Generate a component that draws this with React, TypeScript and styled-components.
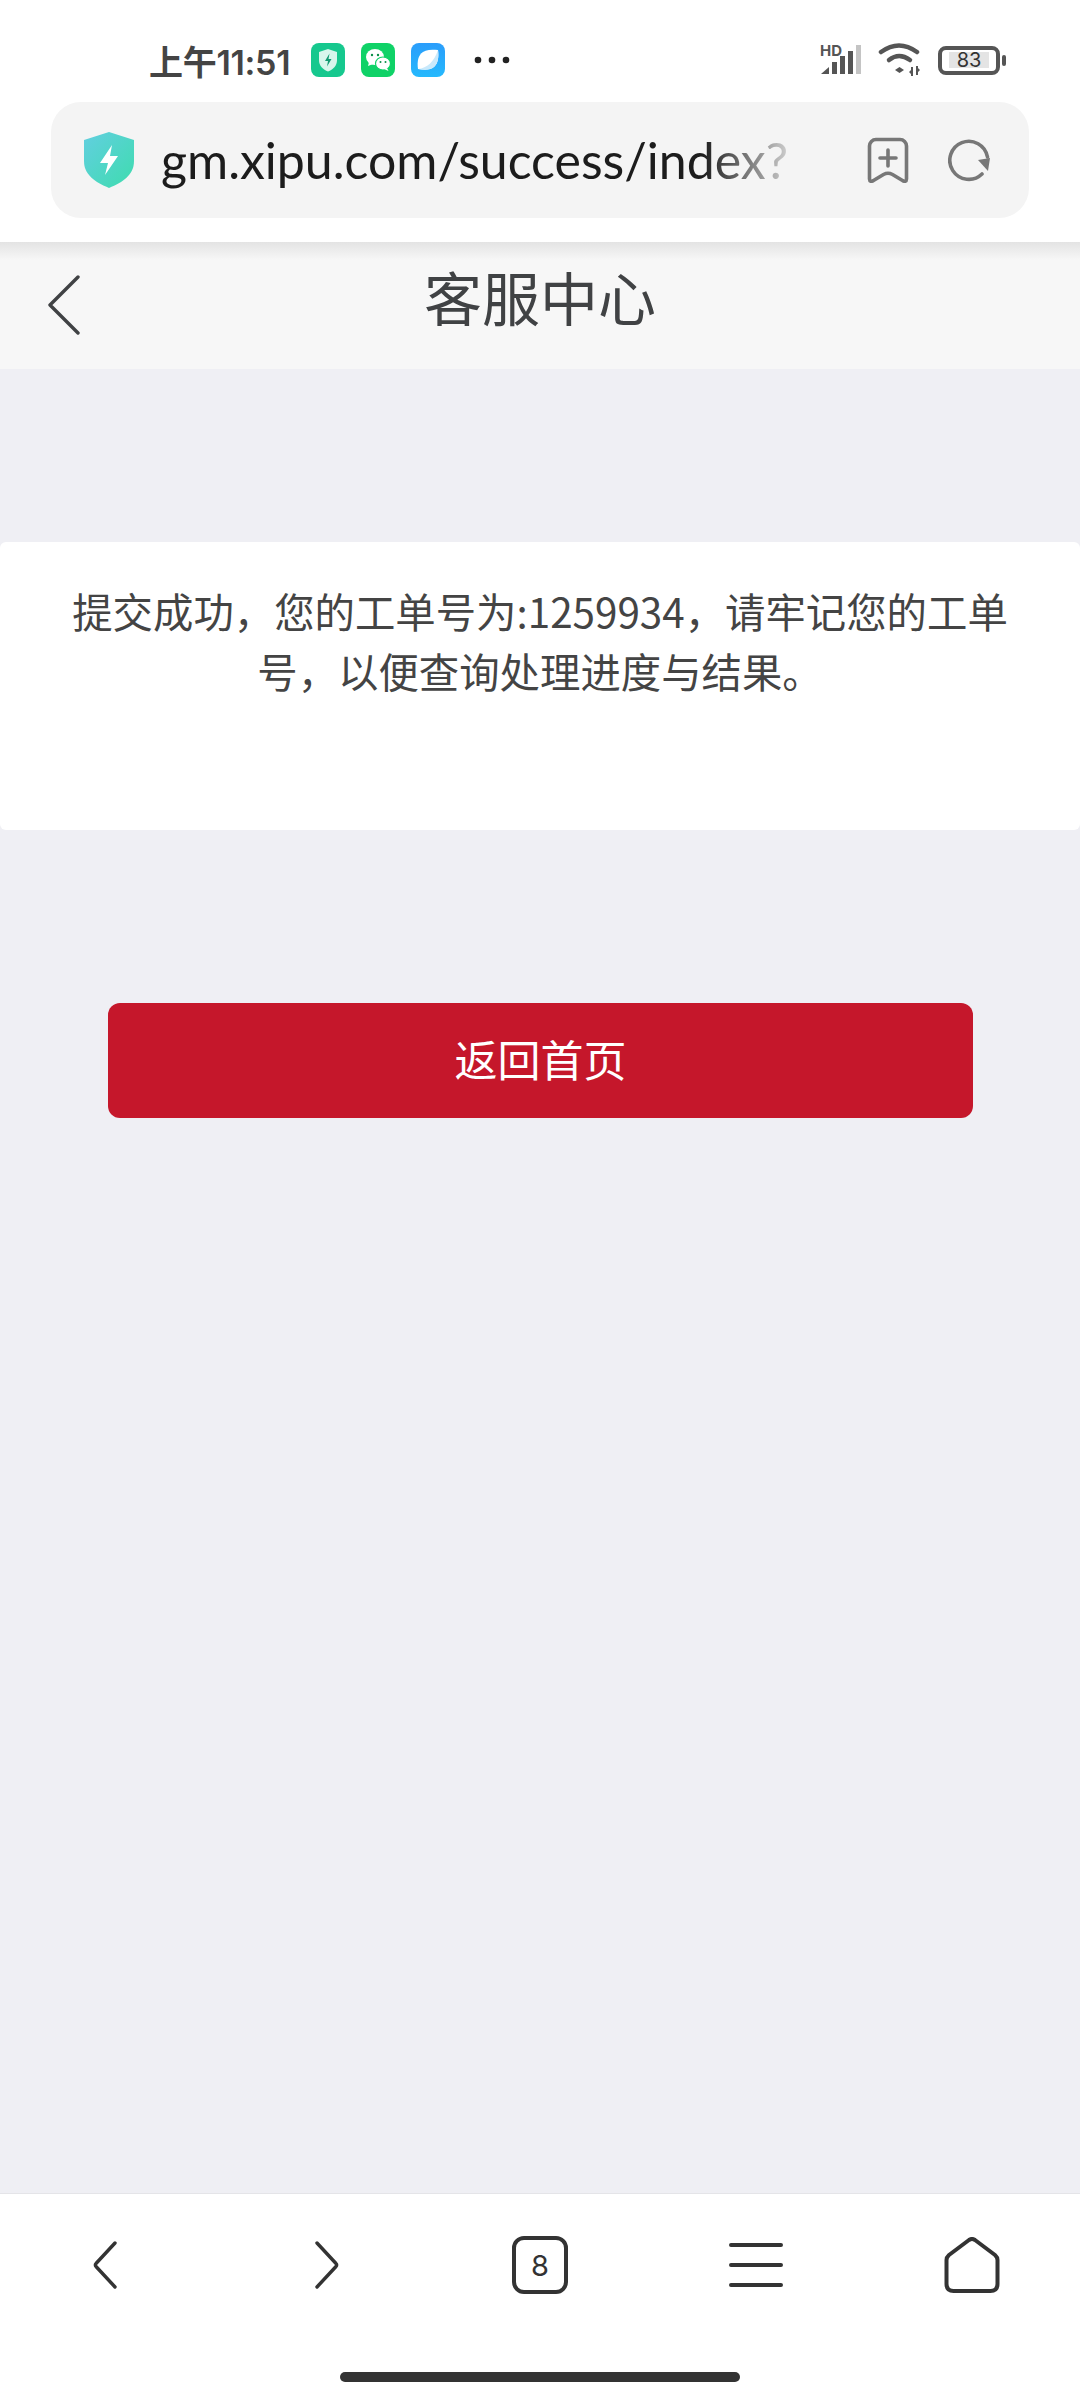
import { createGlobalStyle } from 'styled-components'
import styled from 'styled-components'

const GlobalStyle = createGlobalStyle`
  html, body {
    margin: 0;
    padding: 0;
    background: #fff;
  }
  * {
    box-sizing: border-box;
  }
`

const cjk = `"Noto Sans CJK SC", "Noto Sans", sans-serif`

function ShieldBadge() {
  return (
    <svg width="34" height="34" viewBox="0 0 34 34">
      <rect width="34" height="34" rx="8" fill="#16c88e" />
      <path d="M17 6l9 3v8c0 6-4 9.500-9 11.500C12 26.500 8 23 8 17V9z" fill="#d8f6ec" />
      <path d="M18.500 10.500l-4.500 7.500h3l-1 5.500 4.500-7.500h-3z" fill="#129a72" />
    </svg>
  )
}

function WechatBadge() {
  return (
    <svg width="34" height="34" viewBox="0 0 34 34">
      <rect width="34" height="34" rx="8" fill="#0fd267" />
      <ellipse cx="14" cy="14" rx="9" ry="8" fill="#fff" />
      <path d="M8 19l-1 4 5-2z" fill="#fff" />
      <ellipse cx="22" cy="20.500" rx="7.500" ry="6.500" fill="#fff" stroke="#0fd267" strokeWidth="1.200" />
      <path d="M26 25l1.500 3-4.500-2z" fill="#fff" />
      <circle cx="11" cy="12" r="1.200" fill="#0a8f48" />
      <circle cx="17" cy="12" r="1.200" fill="#0a8f48" />
      <circle cx="19.500" cy="19" r="1" fill="#0a8f48" />
      <circle cx="24.500" cy="19" r="1" fill="#0a8f48" />
    </svg>
  )
}

function BrowserBadge() {
  return (
    <svg width="34" height="34" viewBox="0 0 34 34">
      <defs>
        <linearGradient id="browserBlue" x1="0" y1="0" x2="0" y2="1">
          <stop offset="0" stopColor="#2a9dfb" />
          <stop offset="1" stopColor="#25b9fd" />
        </linearGradient>
      </defs>
      <rect width="34" height="34" rx="8" fill="url(#browserBlue)" />
      <path d="M7 26c-1-7 0-12 3-15.500S19 6 27 7c1 7 0 13-3.500 16.500S14 27.500 7 26z" fill="#fff" />
      <path d="M27 7c1 7 0 13-3.500 16.500S14 27.500 7 26c9-1 16-7 20-19z" fill="#c9e9fb" />
    </svg>
  )
}

function ExtraDots() {
  return (
    <svg width="36" height="8" viewBox="0 0 36 8">
      <circle cx="4" cy="4" r="3.300" fill="#222" />
      <circle cx="18" cy="4" r="3.300" fill="#222" />
      <circle cx="32" cy="4" r="3.300" fill="#222" />
    </svg>
  )
}

function SignalIcon() {
  return (
    <svg width="42" height="40" viewBox="0 0 42 40">
      <text x="0" y="15.500" fontFamily="Inter, sans-serif" fontWeight="700" fontSize="15" fill="#555">HD</text>
      <path d="M1 34l8-7v7z" fill="#555" />
      <rect x="12" y="22" width="5" height="12" fill="#555" />
      <rect x="20" y="16" width="5" height="18" fill="#555" />
      <rect x="28" y="11" width="5" height="23" fill="#555" />
      <rect x="36" y="5" width="5" height="29" fill="#c4c4c4" />
    </svg>
  )
}

function WifiIcon() {
  return (
    <svg width="44" height="34" viewBox="0 0 44 34" fill="none" stroke="#555" strokeWidth="4.500" strokeLinecap="round">
      <path d="M3 9Q21-4 39 9" />
      <path d="M11 17Q21 9 32 17" />
      <path d="M17 27l4.500-3 4.500 3-4.500 3z" fill="#555" stroke="none" />
      <path d="M34 24v9M39 23v9" strokeWidth="2" strokeLinecap="butt" />
      <path d="M31 29l3-3v6zM42 27l-3-3v6z" fill="#555" stroke="none" />
    </svg>
  )
}

function BookmarkIcon() {
  return (
    <svg width="42" height="46" viewBox="0 0 42 46" fill="none" stroke="#777" strokeWidth="3.600" strokeLinecap="round" strokeLinejoin="round">
      <path d="M2.500 9a6.500 6.500 0 0 1 6.500-6.500h24a6.500 6.500 0 0 1 6.500 6.500v33c0 2.500-2 2.800-4 1.500l-10-6c-3-1.600-6-1.600-9 0l-10 6c-2 1.300-4 1-4-1.500z" />
      <path d="M21 13v16M13 21h16" />
    </svg>
  )
}

function ReloadIcon() {
  return (
    <svg width="44" height="44" viewBox="0 0 44 44" fill="none">
      <path d="M39.500 19A19 19 0 1 0 34 36" stroke="#777" strokeWidth="3.600" strokeLinecap="round" />
      <path d="M30 22l12-2-2 13z" fill="#777" />
    </svg>
  )
}

function UrlShield() {
  return (
    <svg width="50" height="56" viewBox="0 0 50 56">
      <defs>
        <linearGradient id="urlShield" x1="0" y1="0" x2="1" y2="1">
          <stop offset="0" stopColor="#62cfe0" />
          <stop offset="1" stopColor="#3edcae" />
        </linearGradient>
      </defs>
      <path d="M25 0l25 8v21c0 14-11 21-25 27C11 50 0 43 0 29V8z" fill="url(#urlShield)" />
      <path d="M28 13L16 31h8l-3 12 13-19h-8z" fill="#fff" />
    </svg>
  )
}

// the two arrows sit a little towards the outside of their grid cells
function ChevronIcon({ flip }: { flip?: boolean }) {
  return (
    <svg width="32" height="48" viewBox="0 0 32 48" fill="none" stroke="#333" strokeWidth="3.400" strokeLinecap="round" strokeLinejoin="round">
      <path d={flip ? 'M9 2l19 20.500a2 2 0 0 1 0 3L9 46' : 'M23 2L4 22.500a2 2 0 0 0 0 3L23 46'} />
    </svg>
  )
}

function MenuIcon() {
  return (
    <svg width="54" height="44" viewBox="0 0 54 44" stroke="#333" strokeWidth="4" strokeLinecap="round">
      <path d="M2 2h50M2 22h50M2 42h50" />
    </svg>
  )
}

function HomeIcon() {
  return (
    <svg width="56" height="56" viewBox="0 0 56 56" fill="none" stroke="#333" strokeWidth="4" strokeLinejoin="round">
      <path d="M2.500 23c0-2 .8-3.500 2.500-5L25 3c2-1.400 4-1.400 6 0l20 15c1.700 1.500 2.500 3 2.500 5v24c0 5-3 7-7 7H9.500c-4 0-7-2-7-7z" />
    </svg>
  )
}

function App() {
  return (
    <>
      <GlobalStyle />
      <Page>
        <TopChrome>
          <StatusBar>
            <Time>上午11:51</Time>
            <Badges>
              <ShieldBadge />
              <WechatBadge />
              <BrowserBadge />
            </Badges>
            <DotsSlot>
              <ExtraDots />
            </DotsSlot>
            <StatusRight>
              <SignalIcon />
              <WifiIcon />
              <Battery>
                <BatteryBody>
                  <BatteryLevel>83</BatteryLevel>
                </BatteryBody>
                <BatteryNub />
              </Battery>
            </StatusRight>
          </StatusBar>
          <AddressBar>
            <UrlShield />
            <UrlText>gm.xipu.com/success/index?</UrlText>
            <AddressActions>
              <BookmarkIcon />
              <ReloadIcon />
            </AddressActions>
          </AddressBar>
        </TopChrome>

        <Header>
          <BackButton>
            <svg width="34" height="60" viewBox="0 0 34 60" fill="none" stroke="#404244" strokeWidth="3.400" strokeLinecap="round" strokeLinejoin="round">
              <path d="M31 2L3 30l28 28" />
            </svg>
          </BackButton>
          <Title>客服中心</Title>
        </Header>

        <Content>
          <MessageCard>提交成功，您的工单号为:1259934，请牢记您的工单号，以便查询处理进度与结果。</MessageCard>
          <HomeButton>返回首页</HomeButton>
        </Content>

        <BottomNav>
          <NavRow>
            <NavItem>
              <ChevronIcon />
            </NavItem>
            <NavItem>
              <ChevronIcon flip />
            </NavItem>
            <NavItem>
              <TabCount>8</TabCount>
            </NavItem>
            <NavItem>
              <MenuIcon />
            </NavItem>
            <NavItem>
              <HomeIcon />
            </NavItem>
          </NavRow>
          <HomeIndicator />
        </BottomNav>
      </Page>
    </>
  )
}

const Page = styled.div`
  display: flex;
  flex-direction: column;
  width: 1080px;
  height: 2400px;
  overflow: hidden;
  background: #efeff4;
  font-family: ${cjk};
`

const TopChrome = styled.div`
  flex-shrink: 0;
  height: 242px;
  padding: 0 51px;
  background: #fff;
`

const StatusBar = styled.div`
  display: flex;
  align-items: center;
  height: 102px;
  margin-right: 23px;
  padding: 18px 0 0 98px;
`

const Time = styled.span`
  width: 162px;
  font-family: Inter, ${cjk};
  font-size: 34px;
  font-weight: 600;
  letter-spacing: -0.3px;
  color: #444;
  white-space: nowrap;
`

const Badges = styled.div`
  display: flex;
  gap: 16px;
`

const DotsSlot = styled.div`
  display: flex;
  margin-left: 29px;
`

const StatusRight = styled.div`
  display: flex;
  align-items: center;
  gap: 16px;
  margin-left: auto;
`

const Battery = styled.div`
  display: flex;
  align-items: center;
  gap: 2px;
`

const BatteryBody = styled.div`
  display: flex;
  align-items: center;
  justify-content: center;
  width: 62px;
  height: 29px;
  border: 4px solid #555;
  border-radius: 8px;
`

const BatteryLevel = styled.span`
  width: 40px;
  background: #e4e4e4;
  font-family: Inter, sans-serif;
  font-size: 20px;
  line-height: 16px;
  text-align: center;
  color: #333;
`

const BatteryNub = styled.div`
  width: 4px;
  height: 11px;
  border-radius: 2px;
  background: #555;
`

const AddressBar = styled.div`
  display: flex;
  align-items: center;
  height: 116px;
  padding: 0 37px 0 33px;
  border-radius: 30px;
  background: #f4f4f4;
`

const UrlText = styled.div`
  width: 630px;
  margin-left: 27px;
  overflow: hidden;
  font-family: Lato, sans-serif;
  font-size: 50px;
  line-height: 60px;
  color: #1c1c1c;
  white-space: nowrap;
  mask-image: linear-gradient(90deg, #000 86%, rgba(0, 0, 0, 0.15) 100%);
`

const AddressActions = styled.div`
  display: flex;
  align-items: center;
  gap: 39px;
  margin-left: auto;
`

const Header = styled.div`
  position: relative;
  display: flex;
  align-items: center;
  justify-content: center;
  flex-shrink: 0;
  height: 127px;
  padding-bottom: 20px;
  background: linear-gradient(#e3e3e3 0, #f7f7f7 18px);
`

const BackButton = styled.div`
  position: absolute;
  top: 33px;
  left: 47px;
  display: flex;
`

const Title = styled.h1`
  margin: 0;
  font-size: 58px;
  font-weight: 400;
  line-height: 72px;
  color: #404244;
`

const Content = styled.main`
  flex: 1;
  display: flex;
  flex-direction: column;
  padding-top: 173px;
`

const MessageCard = styled.div`
  height: 288px;
  padding: 39px 70px 0;
  border-radius: 6px;
  background: #fff;
  font-size: 40.4px;
  line-height: 60px;
  text-align: center;
  color: #444;
`

const HomeButton = styled.button`
  width: 865px;
  height: 115px;
  margin: 173px 0 0 108px;
  padding: 0 0 5px;
  border: none;
  border-radius: 12px;
  background: #c5172b;
  font-family: ${cjk};
  font-size: 43px;
  color: #fff;
`

const BottomNav = styled.nav`
  display: flex;
  flex-direction: column;
  align-items: center;
  flex-shrink: 0;
  height: 207px;
  padding-top: 41px;
  border-top: 1px solid #e4e4e8;
  background: #fff;
`

const NavRow = styled.div`
  display: grid;
  grid-template-columns: repeat(5, 216px);
  width: 100%;
  height: 60px;
`

const NavItem = styled.div`
  display: flex;
  align-items: center;
  justify-content: center;
`

const TabCount = styled.div`
  display: flex;
  align-items: center;
  justify-content: center;
  width: 56px;
  height: 58px;
  border: 4px solid #333;
  border-radius: 12px;
  font-family: Inter, sans-serif;
  font-size: 29px;
  color: #333;
`

const HomeIndicator = styled.div`
  width: 400px;
  height: 10px;
  margin-top: 77px;
  border-radius: 5px;
  background: #333;
`

export default App
